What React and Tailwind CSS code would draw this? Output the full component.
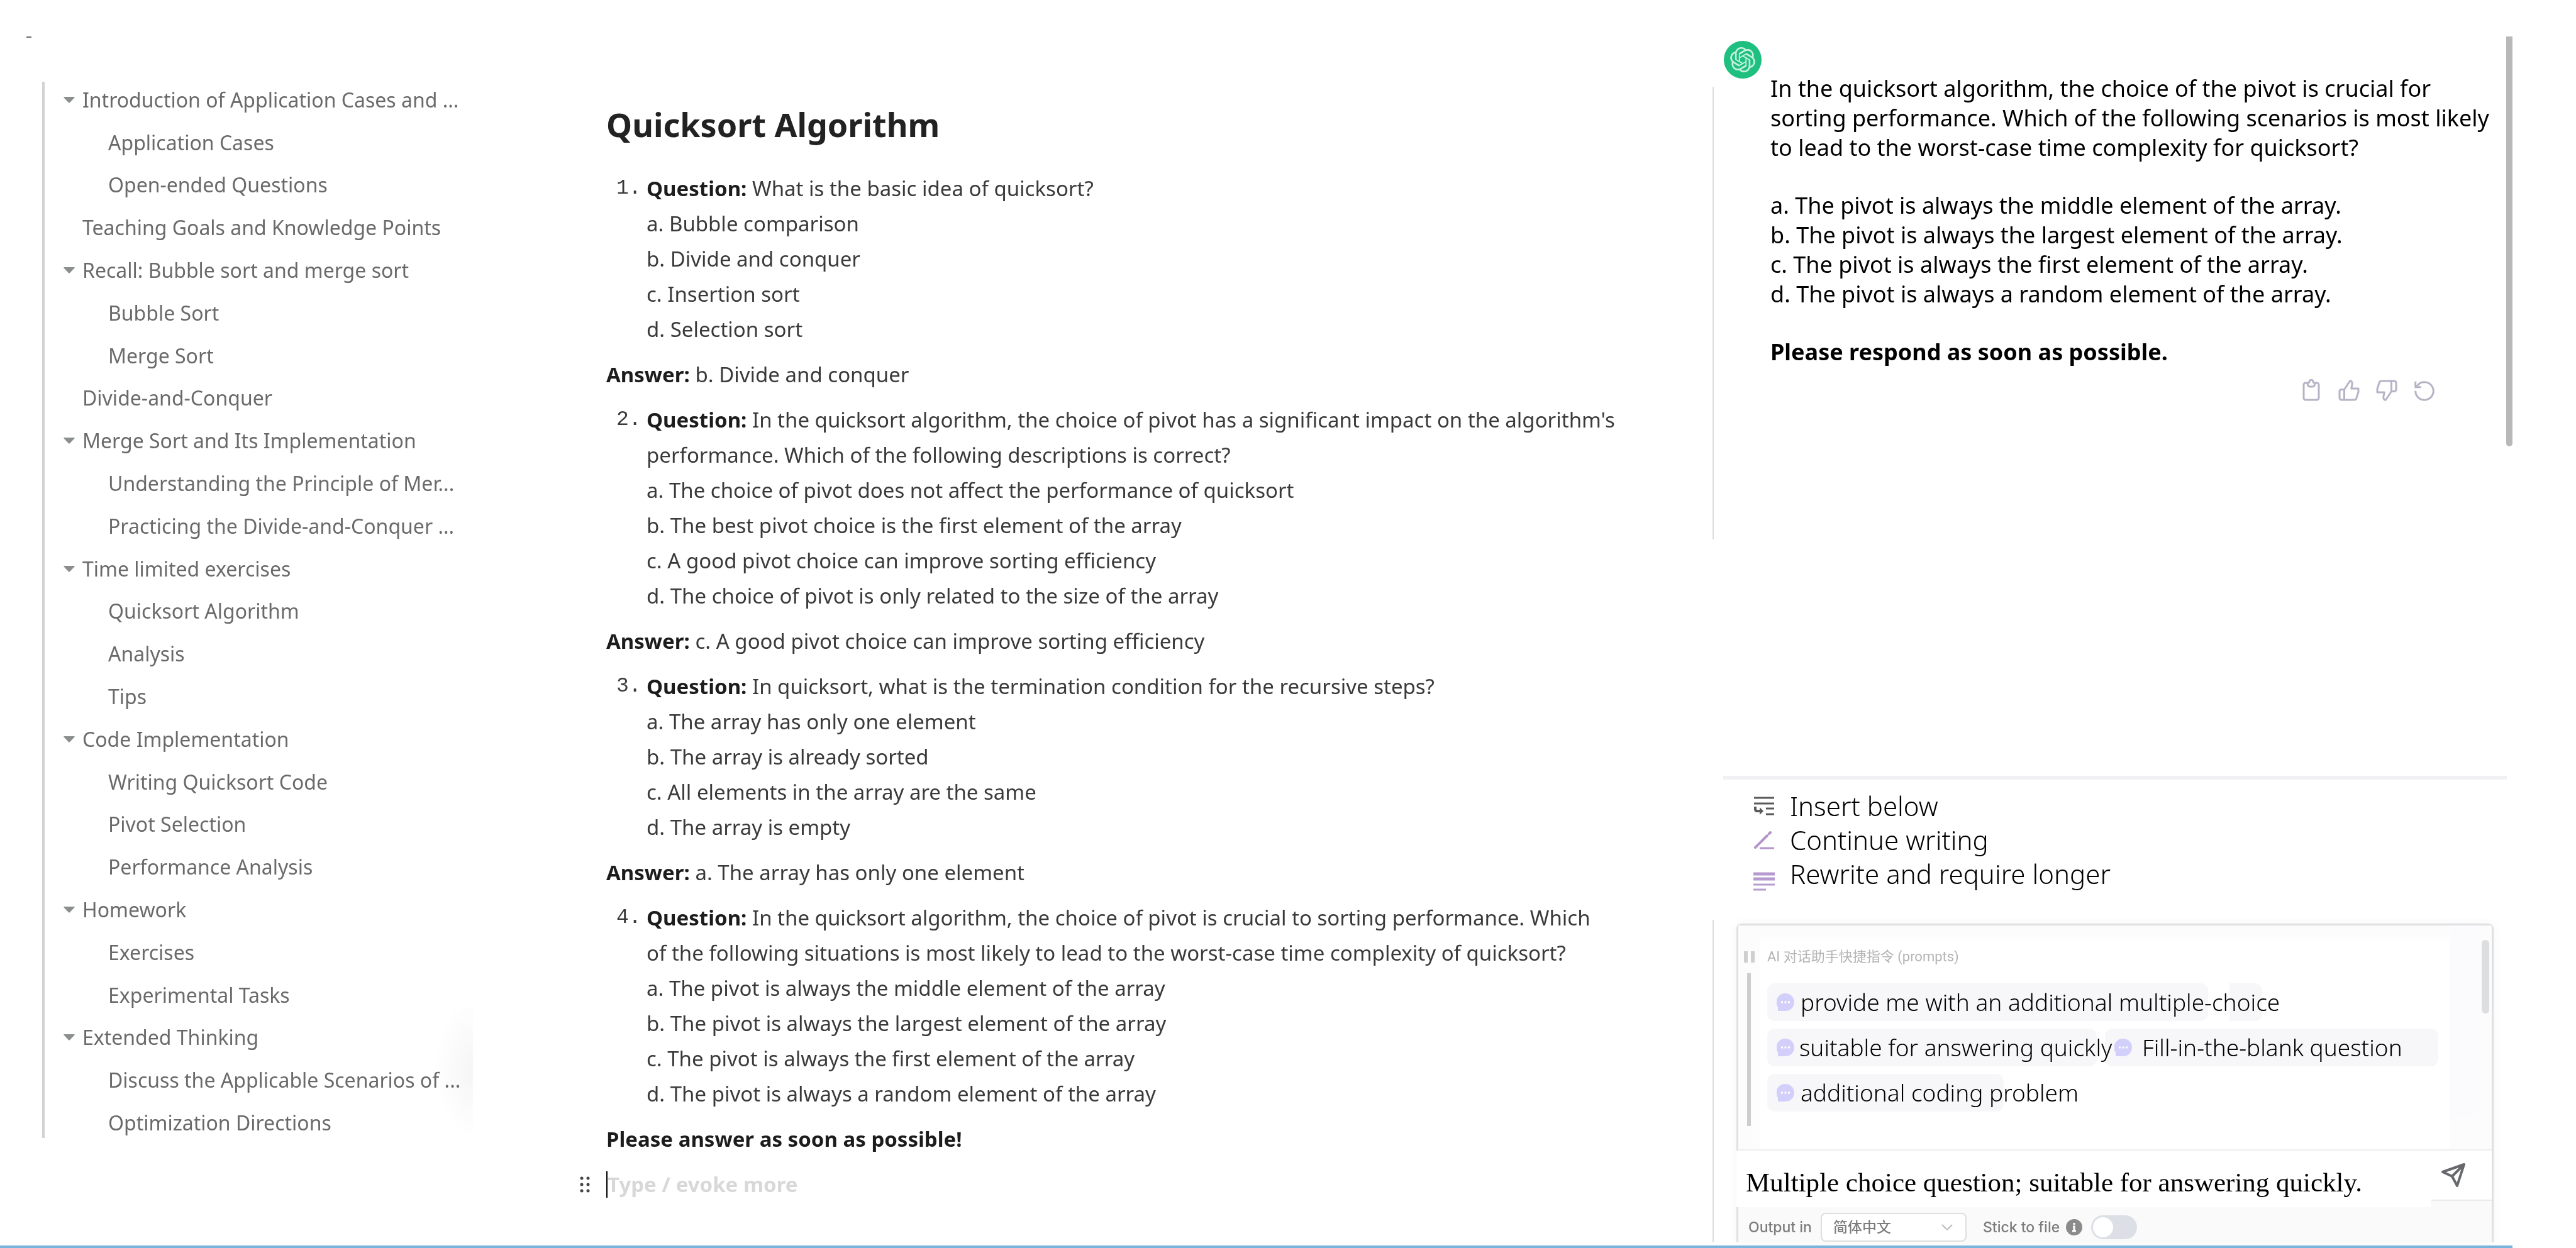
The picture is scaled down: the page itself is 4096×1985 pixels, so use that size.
import React from "react";
import { SiOpenai } from "react-icons/si";

const outline = [
  { label: "Introduction of Application Cases and ...", open: true },
  { label: "Application Cases", child: true },
  { label: "Open-ended Questions", child: true },
  { label: "Teaching Goals and Knowledge Points" },
  { label: "Recall: Bubble sort and merge sort", open: true },
  { label: "Bubble Sort", child: true },
  { label: "Merge Sort", child: true },
  { label: "Divide-and-Conquer" },
  { label: "Merge Sort and Its Implementation", open: true },
  { label: "Understanding the Principle of Mer...", child: true },
  { label: "Practicing the Divide-and-Conquer ...", child: true },
  { label: "Time limited exercises", open: true },
  { label: "Quicksort Algorithm", child: true },
  { label: "Analysis", child: true },
  { label: "Tips", child: true },
  { label: "Code Implementation", open: true },
  { label: "Writing Quicksort Code", child: true },
  { label: "Pivot Selection", child: true },
  { label: "Performance Analysis", child: true },
  { label: "Homework", open: true },
  { label: "Exercises", child: true },
  { label: "Experimental Tasks", child: true },
  { label: "Extended Thinking", open: true },
  { label: "Discuss the Applicable Scenarios of ...", child: true },
  { label: "Optimization Directions", child: true },
];

const questions = [
  {
    text: "What is the basic idea of quicksort?",
    options: ["a. Bubble comparison", "b. Divide and conquer", "c. Insertion sort", "d. Selection sort"],
    answer: "b. Divide and conquer",
  },
  {
    text: "In the quicksort algorithm, the choice of pivot has a significant impact on the algorithm's\nperformance. Which of the following descriptions is correct?",
    options: [
      "a. The choice of pivot does not affect the performance of quicksort",
      "b. The best pivot choice is the first element of the array",
      "c. A good pivot choice can improve sorting efficiency",
      "d. The choice of pivot is only related to the size of the array",
    ],
    answer: "c. A good pivot choice can improve sorting efficiency",
  },
  {
    text: "In quicksort, what is the termination condition for the recursive steps?",
    options: [
      "a. The array has only one element",
      "b. The array is already sorted",
      "c. All elements in the array are the same",
      "d. The array is empty",
    ],
    answer: "a. The array has only one element",
  },
  {
    text: "In the quicksort algorithm, the choice of pivot is crucial to sorting performance. Which\nof the following situations is most likely to lead to the worst-case time complexity of quicksort?",
    options: [
      "a. The pivot is always the middle element of the array",
      "b. The pivot is always the largest element of the array",
      "c. The pivot is always the first element of the array",
      "d. The pivot is always a random element of the array",
    ],
  },
];

function Outline() {
  return (
    <div className="relative flex flex-col pt-[58px] pb-[166px] pl-[42px]">
      <div className="h-[2px] w-2 bg-[#6b6b74]" />
      <nav aria-label="Outline" className="mt-[70px] ml-[25px] flex flex-1 border-l-4 border-[#d2d2d2] pl-[30px]">
        <ul className="-mt-[5px] -mb-[10px] flex flex-col">
          {outline.map((item) => (
            <li key={item.label} className="flex flex-1 items-center text-[32px] leading-10 text-[#6a6a6a]">
              {item.open ? (
                <button type="button" aria-label={"Collapse " + item.label} className="w-[30px]">
                  <svg viewBox="0 0 18 10" className="h-[10px] w-[18px] fill-[#8a8f8c]">
                    <path d="M1 0h16q1.500 0 .5 1.200L10.200 9q-1.200 1.200-2.400 0L.5 1.200Q-.5 0 1 0z" />
                  </svg>
                </button>
              ) : (
                <span className={item.child ? "w-[71px]" : "w-[30px]"} />
              )}
              <a href="#" className="whitespace-nowrap">{item.label}</a>
            </li>
          ))}
        </ul>
      </nav>
      <div className="absolute bottom-[166px] left-[690px] h-[220px] w-[62px] bg-[radial-gradient(ellipse_at_right,#f5f5f5,#ffffff_70%)] mix-blend-multiply" />
    </div>
  );
}

function Editor() {
  return (
    <main className="pt-[160px] pr-[120px] pl-[44px] text-[33px] leading-[56px] text-[#3a3a3a]">
      <h1 className="mb-[36px] text-[52px] leading-[76px] font-bold text-[#222]">Quicksort Algorithm</h1>
      <div className="flex flex-col gap-4">
        {questions.map((q, i) => (
          <React.Fragment key={q.text}>
            <div className="flex">
              <span className="w-16 shrink-0 pl-4 font-['Liberation_Mono',monospace]">{i + 1}.</span>
              <div>
                <p className="whitespace-pre-line">
                  <strong className="text-[#1c1c1c]">Question:</strong> {q.text}
                </p>
                {q.options.map((o) => (
                  <p key={o}>{o}</p>
                ))}
              </div>
            </div>
            {q.answer && (
              <p>
                <strong className="text-[#1c1c1c]">Answer:</strong> {q.answer}
              </p>
            )}
          </React.Fragment>
        ))}
        <p className="font-bold text-[#1c1c1c]">Please answer as soon as possible!</p>
        <div className="-ml-[42px] flex h-14 items-center">
          <button type="button" aria-label="Drag block" className="w-[42px]">
            <svg viewBox="0 0 16 26" className="h-[26px] w-4 fill-[#444]">
              {[3, 13, 23].map((y) => (
                <React.Fragment key={y}>
                  <circle cx="3" cy={y} r="2.500" />
                  <circle cx="13" cy={y} r="2.500" />
                </React.Fragment>
              ))}
            </svg>
          </button>
          <input
            aria-label="New block"
            placeholder="Type / evoke more"
            className="h-[42px] flex-1 border-l-2 border-black font-bold outline-none placeholder:text-[#d8d8d8]"
          />
        </div>
      </div>
    </main>
  );
}

function Action({ label, children }) {
  return (
    <button type="button" aria-label={label}>
      <svg viewBox="0 0 24 24" strokeLinejoin="round" className="size-9 fill-none stroke-[#b5b4c6] stroke-2">
        {children}
      </svg>
    </button>
  );
}

function Answer() {
  return (
    <section className="flex h-[652px]">
      <div className="relative mt-[80px] h-[720px] flex-1 border-l-2 border-[#dcdcdc] pl-[90px] text-[36px] leading-[47px] text-black">
        <div className="absolute -top-[73px] left-4 grid size-[60px] place-items-center rounded-full bg-[#1fc07f]">
          <SiOpenai className="size-10 fill-[#c5f2de]" />
        </div>
        <div className="-mt-[21px] flex flex-col gap-[45px]">
          <p className="max-w-[1165px]">
            In the quicksort algorithm, the choice of the pivot is crucial for sorting performance. Which of the
            following scenarios is most likely to lead to the worst-case time complexity for quicksort?
          </p>
          <div>
            <p>a. The pivot is always the middle element of the array.</p>
            <p>b. The pivot is always the largest element of the array.</p>
            <p>c. The pivot is always the first element of the array.</p>
            <p>d. The pivot is always a random element of the array.</p>
          </div>
          <p className="font-bold">Please respond as soon as possible.</p>
        </div>
        <div className="mt-5 mr-[112px] flex justify-end gap-6">
          <Action label="Copy">
            <path d="M8 4H6a2 2 0 0 0-2 2v14a2 2 0 0 0 2 2h12a2 2 0 0 0 2-2V6a2 2 0 0 0-2-2h-2" />
            <path d="M8 4q2 0 2-1.200a2 2 0 0 1 4 0Q14 4 16 4q0 4-3 4h-2q-3 0-3-4z" />
          </Action>
          <Action label="Good answer">
            <path d="M7 22V11M2 13v7a2 2 0 0 0 2 2h13.500a2.500 2.500 0 0 0 2.400-1.800L22 13.500V10h-7.500L15.500 5c0-2-1-3.500-2.500-3L7 11H4a2 2 0 0 0-2 2z" />
          </Action>
          <Action label="Bad answer">
            <path d="M17 2v11M22 11V4a2 2 0 0 0-2-2H6.500a2.500 2.500 0 0 0-2.400 1.800L2 10.500V14h7.500L8.500 19c0 2 1 3.500 2.500 3l6-9h3a2 2 0 0 0 2-2z" />
          </Action>
          <Action label="Regenerate">
            <path d="M2.500 2.500v6h6M4 7.500a9.500 9.500 0 1 1-1.500 5" />
          </Action>
        </div>
      </div>
      <div className="h-full w-[10px] shrink-0 rounded-b-full bg-[#b8b8b8]" />
    </section>
  );
}

function Commands() {
  return (
    <ul className="flex flex-col text-[42px] leading-[54px] font-light text-black">
      <li>
        <button type="button" className="flex items-center gap-6">
          <svg viewBox="0 0 34 30" className="h-[30px] w-[34px] fill-none stroke-[#5a5a5a] stroke-[3]">
            <path d="M1 2h32M1 11h32M20 19h13M20 28h13" />
            <path d="M3 16v4q0 3 3 3h6" className="stroke-[4]" />
            <path d="M10 17l6 6-6 6z" className="fill-[#5a5a5a] stroke-none" />
          </svg>
          Insert below
        </button>
      </li>
      <li>
        <button type="button" className="flex items-center gap-6">
          <svg viewBox="0 0 34 30" className="h-[30px] w-[34px] fill-none stroke-[#b394cc] stroke-[3]">
            <path d="M10 28h23" />
            <path d="M3 27L22 8M25 5l2-2" strokeLinecap="round" className="stroke-[4]" />
          </svg>
          Continue writing
        </button>
      </li>
      <li>
        <button type="button" className="flex items-center gap-6">
          <svg viewBox="0 0 34 30" className="h-[30px] w-[34px] self-end fill-none stroke-[#b79bd0] stroke-[4]">
            <path d="M0 3h34M0 11h34" className="stroke-[5]" />
            <path d="M0 20h34M0 28h20" className="stroke-[3]" />
          </svg>
          Rewrite and require longer
        </button>
      </li>
    </ul>
  );
}

function Bubble() {
  return (
    <svg viewBox="0 0 28 28" className="size-7 shrink-0">
      <path d="M14 0a14 14 0 1 1 0 28H2V22A14 14 0 0 1 14 0z" className="fill-[#d3cffb]" />
      <path d="M7 14h3M12.500 14h3M18 14h3" className="stroke-white stroke-[3]" />
    </svg>
  );
}

const chip =
  "relative flex h-[60px] items-center rounded-xl bg-[#f7f7f9] pl-[15px] text-left whitespace-nowrap";

function Prompts() {
  return (
    <div className="flex h-[356px] bg-[#fcfcfd]">
      <div className="flex w-[34px] flex-col items-center pt-[41px]">
        <div className="flex gap-[5px]">
          <div className="h-[18px] w-[6px] bg-[#cfcfcf]" />
          <div className="h-[18px] w-[6px] bg-[#cfcfcf]" />
        </div>
        <div className="mt-[17px] h-[243px] w-[6px] bg-[#cdcdcf]" />
      </div>
      <div className="flex-1 bg-linear-to-b from-[#fcfcfd] from-[4%] via-white via-[8%] to-white pl-[12px]">
        <h2 className="pt-[34px] font-['Roboto','Noto_Sans_CJK_SC',sans-serif] text-[22px] leading-8 text-[#b4b4b4]">
          AI 对话助手快捷指令 (prompts)
        </h2>
        <div className="mt-[26px] flex flex-col gap-3 text-[37px] leading-[44px] font-light text-black">
          <div className="flex">
            <button type="button" className={chip + " z-20 w-[701px] gap-[10px]"}>
              <Bubble />
              provide me with an additional multiple-choice
            </button>
            <span className="ml-[34px] h-[60px] w-[52px] rounded-r-xl bg-[#f7f7f9]" />
          </div>
          <div className="flex gap-[13px]">
            <button type="button" className={chip + " z-20 w-[524px] gap-2"}>
              <Bubble />
              suitable for answering quickly
            </button>
            <button type="button" className={chip + " z-10 w-[530px] gap-4"}>
              <Bubble />
              Fill-in-the-blank question
            </button>
          </div>
          <button type="button" className={chip + " z-10 w-[376px] gap-[10px]"}>
            <Bubble />
            additional coding problem
          </button>
        </div>
      </div>
      <div className="mb-[50px] w-[46px] bg-[#fbfbfd]" />
      <div className="w-[21px] pt-[23px] pl-[5px]">
        <div className="h-[117px] w-3 rounded-full bg-[#dddee0]" />
      </div>
    </div>
  );
}

function Composer() {
  return (
    <section className="mt-[46px] flex h-[513px] border-l-2 border-[#dcdcdc] pl-9">
      <div className="mt-[6px] flex flex-1 flex-col rounded-t-lg border-x-[3px] border-t-[3px] border-[#e0e0e2] shadow-[0_0_16px_#f4f4f4]">
        <Prompts />
        <form className="flex h-[92px] border-t-2 border-[#eeeef0] bg-[#fafafa]">
          <input
            aria-label="Message"
            defaultValue="Multiple choice question; suitable for answering quickly."
            className="relative -ml-[3px] flex-1 bg-white pt-3 pl-[15px] font-['Liberation_Serif',serif] text-[43px] text-black outline-none"
          />
          <div className="flex h-20 w-24 items-center border-b-2 border-[#ececee] bg-white pl-[15px]">
            <button type="submit" aria-label="Send">
              <svg viewBox="0 0 40 40" className="size-10 fill-none stroke-[#66686b] stroke-[4]">
                <path d="M37 3L3 15l15 7 8 15zM37 3L18 22" strokeLinejoin="round" />
              </svg>
            </button>
          </div>
        </form>
        <div className="flex flex-1 items-center bg-[#fafafa] pt-2 pl-4 font-['Inter','Noto_Sans_CJK_SC',sans-serif] text-[23px] leading-8 font-medium text-[#7c7c7c]">
          <label htmlFor="lang">Output in</label>
          <div className="relative ml-[14px]">
            <select
              id="lang"
              className="h-[46px] w-[232px] appearance-none rounded-lg border-2 border-[#dedede] bg-white pl-[18px] outline-none"
            >
              <option>简体中文</option>
            </select>
            <svg viewBox="0 0 18 10" className="pointer-events-none absolute top-[18px] right-[22px] h-[10px] w-[18px] fill-none stroke-[#bbb] stroke-2">
              <path d="M1 1l8 8 8-8" />
            </svg>
          </div>
          <label htmlFor="stick" className="ml-[26px]">Stick to file</label>
          <svg viewBox="0 0 26 26" className="ml-[10px] size-[26px]">
            <circle cx="13" cy="13" r="13" className="fill-[#8b8b8b]" />
            <path d="M13 6v3M11 12h2v7M10 19h6" className="fill-none stroke-white stroke-[3]" />
          </svg>
          <span className="relative ml-[14px] h-[38px] w-[73px]">
            <input
              id="stick"
              type="checkbox"
              role="switch"
              className="h-full w-full appearance-none rounded-full bg-[#dcdfe6]"
            />
            <span className="pointer-events-none absolute top-[3px] left-[3px] size-8 rounded-full bg-white" />
          </span>
        </div>
      </div>
      <div className="w-[30px]" />
    </section>
  );
}

export default function App() {
  return (
    <div className="flex min-h-screen flex-col overflow-hidden bg-white font-['Noto_Sans','Noto_Sans_CJK_SC',sans-serif]">
      <div className="grid flex-1 grid-cols-[920fr_1803fr_1373fr]">
        <Outline />
        <Editor />
        <aside className="flex flex-col pt-[58px] pr-[101px]">
          <Answer />
          <div className="mt-[524px] mr-[9px] ml-[17px] h-[6px] bg-[#f1f1f4]" />
          <div className="mt-[15px] ml-[65px]">
            <Commands />
          </div>
          <Composer />
        </aside>
      </div>
      <div className="mt-[5px] mr-[101px] h-1 bg-[#79b4df]" />
    </div>
  );
}
